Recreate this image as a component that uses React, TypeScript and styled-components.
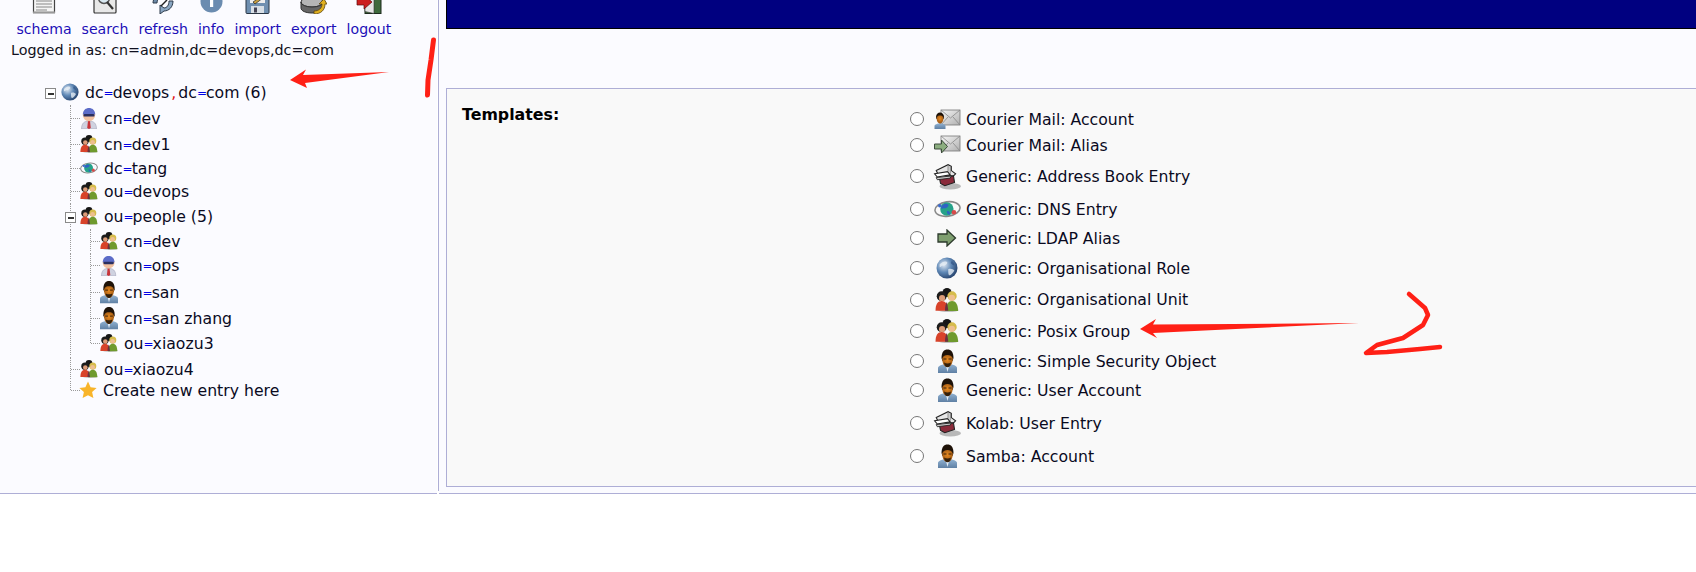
import React from "react";
import styled, { createGlobalStyle } from "styled-components";

const Global = createGlobalStyle`
  html, body { margin: 0; padding: 0; background: #fff; }
  body { font-family: "DejaVu Sans", Verdana, sans-serif; color: #000; overflow: hidden; }
`;

const Page = styled.div`
  position: relative;
  width: 1696px;
  height: 572px;
  background: #fff;
`;
const Frame = styled.div`
  display: flex;
  height: 494px;
  gap: 2px;
`;
const Sidebar = styled.aside`
  width: 437px;
  flex: none;
  background: #fbfbff;
  box-sizing: border-box;
  border-bottom: 1.5px solid #aeaed6;
  position: relative;
`;
const Divider = styled.div`
  position: absolute;
  top: 0;
  right: -2px;
  width: 1.5px;
  height: 491px;
  background: #aeaed6;
`;
const Main = styled.main`
  flex: 1;
  min-width: 0;
  display: flex;
  flex-direction: column;
  box-sizing: border-box;
  padding-left: 7px;
  background: #fbfbff;
  border-bottom: 1.5px solid #aeaed6;
`;
const Banner = styled.div`
  height: 28px;
  flex: none;
  background: #000080;
  border-left: 1px solid #000;
  border-bottom: 1px solid #000;
  border-top: 1px solid #000;
  margin-top: -1px;
`;
const Panel = styled.section`
  margin-top: 59px;
  height: 399px;
  flex: none;
  display: flex;
  box-sizing: border-box;
  background: #f9f9f9;
  border: 1px solid #aeaed6;
  border-right: none;
`;
const PanelTitle = styled.h2`
  margin: 0;
  width: 463px;
  flex: none;
  padding: 17px 0 0 15px;
  box-sizing: border-box;
  font-size: 15.8px;
  line-height: 18px;
  font-weight: bold;
`;
const TemplateList = styled.div`
  padding-top: 17px;
  display: flex;
  flex-direction: column;
`;
const TemplateRow = styled.label<{ $h: number }>`
  display: flex;
  align-items: center;
  height: ${(p) => p.$h}px;
  font-size: 15.7px;
  color: #0a0a1e;
`;
const Radio = styled.input`
  width: 14px;
  height: 14px;
  margin: 0;
  flex: none;
`;
const TemplateIconCell = styled.span`
  width: 30px;
  margin: 0 4px 0 8px;
  flex: none;
  display: flex;
  justify-content: center;
  align-items: center;
`;
const Toolbar = styled.nav`
  display: flex;
  gap: 10px;
  padding-left: 16.500px;
`;
const Tool = styled.a`
  display: flex;
  flex-direction: column;
  align-items: center;
  font-size: 14.1px;
  line-height: 16px;
  color: #1c0fb8;
`;
const ToolIcon = styled.span`
  height: 14px;
  margin-bottom: 7px;
  display: block;
  overflow: hidden;
`;
const LoggedIn = styled.div`
  margin-top: 5px;
  padding-left: 11px;
  font-size: 14.3px;
  line-height: 16px;
  color: #101020;
`;
const Tree = styled.div`
  margin-top: 21px;
  padding-left: 40px;
`;
const TreeRow = styled.div<{ $h: number }>`
  display: flex;
  align-items: center;
  height: ${(p) => p.$h}px;
  font-size: 15.7px;
  color: #0a0a1e;
`;
const Guide = styled.span<{ $kind: "pipe" | "tee" | "elbow" }>`
  width: 20px;
  flex: none;
  align-self: stretch;
  position: relative;
  &::before {
    content: "";
    position: absolute;
    left: 10px;
    top: 0;
    height: ${(p) => (p.$kind === "elbow" ? "50%" : "calc(100% - 2px)")};
    border-left: 1px dotted #9a9a9a;
  }
  &::after {
    content: "";
    display: ${(p) => (p.$kind === "pipe" ? "none" : "block")};
    position: absolute;
    left: 11px;
    width: 9px;
    top: 50%;
    border-top: 1px dotted #9a9a9a;
  }
`;
const Expander = styled.span`
  width: 11px;
  height: 11px;
  box-sizing: border-box;
  border: 1px solid #8a8a8a;
  background: #fff;
  position: absolute;
  left: 5px;
  top: calc(50% - 4px);
  &::after {
    content: "";
    position: absolute;
    left: 1.500px;
    right: 1.500px;
    top: 3.500px;
    height: 2px;
    background: #333;
  }
`;
const ExpanderCell = styled.span<{ $guide?: boolean }>`
  width: 20px;
  flex: none;
  align-self: stretch;
  position: relative;
  ${(p) =>
    p.$guide
      ? `&::before { content: ""; position: absolute; left: 10px; top: 0; bottom: 2px; border-left: 1px dotted #9a9a9a; }`
      : ""}
`;
const TreeIconCell = styled.span<{ $nudge?: number }>`
  width: 18px;
  margin-left: ${(p) => p.$nudge ?? 0}px;
  margin-right: 6px;
  flex: none;
  display: flex;
  justify-content: center;
  align-items: center;
`;
const Spacer = styled.span`
  width: 1px;
  flex: none;
`;
const Eq = styled.span`
  color: #0000e6;
  font-size: 12px;
  letter-spacing: -1px;
  vertical-align: 1px;
`;
const Comma = styled.span`
  color: #e01010;
  margin: 0 2px;
`;
const Annotations = styled.svg`
  position: absolute;
  left: 0;
  top: 0;
  pointer-events: none;
`;

/* ---------- icons ---------- */
const Defs = () => (
  <svg width="0" height="0" style={{ position: "absolute" }}>
    <defs>
      <radialGradient id="earth" cx="0.35" cy="0.35" r="0.8">
        <stop offset="0" stopColor="#dfe8f2" />
        <stop offset="0.45" stopColor="#5f88b6" />
        <stop offset="1" stopColor="#16305a" />
      </radialGradient>
      <linearGradient id="shirt" x1="0" y1="0" x2="0" y2="1">
        <stop offset="0" stopColor="#8fb0d0" />
        <stop offset="1" stopColor="#5f80a4" />
      </linearGradient>
      <radialGradient id="skin" cx="0.5" cy="0.4" r="0.7">
        <stop offset="0" stopColor="#e88a20" />
        <stop offset="1" stopColor="#8a4a10" />
      </radialGradient>
      <linearGradient id="env" x1="0" y1="0" x2="1" y2="1">
        <stop offset="0" stopColor="#f6f6f6" />
        <stop offset="1" stopColor="#b0b0b0" />
      </linearGradient>
    </defs>
  </svg>
);

const Globe = ({ s = 18 }: { s?: number }) => (
  <svg width={s} height={s} viewBox="0 0 18 18">
    <circle cx="9" cy="9" r="8.600" fill="url(#earth)" />
    <path d="M3 6c2-2 4-3 6-2 1 1-1 3-3 3S4 9 3 8zM10 10c2-1 4 0 5 1-1 2-3 4-4 4s-1-3-1-5z" fill="#e6eef5" opacity=".8" />
    <path d="M13 3c1 1 2 2 2 4-1 0-2-1-3-2z" fill="#2c4f80" opacity=".6" />
  </svg>
);

const Group = ({ s = 18 }: { s?: number }) => (
  <svg width={s} height={s} viewBox="0 0 18 18">
    <ellipse cx="10" cy="16.500" rx="7.800" ry="1.500" fill="#888" opacity=".5" />
    <circle cx="9" cy="3.400" r="3.400" fill="#161616" />
    <circle cx="5" cy="6.200" r="3.700" fill="#1c1c1c" />
    <circle cx="5.300" cy="7.600" r="2.300" fill="#dc9c78" />
    <path d="M.4 17c0-5 1.800-7.200 4.600-7.200S9.500 12 9.500 17z" fill="#d8432a" />
    <circle cx="12.800" cy="6" r="3.500" fill="#d6bc4c" />
    <circle cx="12.600" cy="7.400" r="2.400" fill="#eebf90" />
    <path d="M8.200 17.200c0-5 2-7.400 4.600-7.400s4.500 2.400 4.500 7.400z" fill="#6f9a2e" />
    <path d="M7.500 17c0-3 .6-5.500 1.500-6.500l1 6.500z" fill="#6b3040" />
  </svg>
);

const Officer = ({ s = 22 }: { s?: number }) => (
  <svg width={s * 0.82} height={s} viewBox="0 0 18 22">
    <path d="M1.500 22c0-6 3-8 7.500-8s7.500 2 7.500 8z" fill="#cfd2e0" stroke="#9a9ab0" strokeWidth=".5" />
    <path d="M8 14h2l.8 7-1.800 1-1.800-1z" fill="#c8353a" />
    <circle cx="9" cy="8" r="6.200" fill="#f0c0a0" />
    <path d="M2.800 7.500C3 3 6 1 9 1s6 2 6.200 6.500z" fill="#5c6cc8" />
    <rect x="3.500" y="7" width="11" height="2.600" rx="1.200" fill="#2a2f60" />
  </svg>
);

const Man = ({ w = 19, h = 24 }: { w?: number; h?: number }) => (
  <svg width={w} height={h} viewBox="0 0 19 24">
    <path d="M0 24v-5c0-2 3-3 5-3.500h9c2 .5 5 1.500 5 3.500v5z" fill="url(#shirt)" />
    <path d="M8 17h3l-1.500 6z" fill="#e6eef5" />
    <path d="M3.500 9C3.500 3 6 .5 9.500.500S15.500 3 15.500 9l-1 3h-10z" fill="#1e1208" />
    <path d="M4.200 9.500c1-3 3-3.500 5.300-3.500s4.300.5 5.300 3.500c0 5-2.300 8.500-5.300 8.500s-5.300-3.500-5.300-8.500z" fill="url(#skin)" />
    <path d="M6 13.500c2 1.200 5 1.200 7 0-.3 3-2 4.800-3.500 4.800S6.300 16.500 6 13.500z" fill="#33200c" />
    <path d="M5.500 10h3M10.500 10h3" stroke="#3a2008" strokeWidth="1" />
  </svg>
);

const Dns = ({ w = 21, h = 15 }: { w?: number; h?: number }) => (
  <svg width={w} height={h} viewBox="0 0 21 15">
    <ellipse cx="10.500" cy="7.500" rx="9.800" ry="5.600" fill="none" stroke="#8a8a8a" strokeWidth="1.200" transform="rotate(-8 10.500 7.500)" />
    <circle cx="10" cy="7.500" r="5.200" fill="#26a28a" />
    <path d="M6 5c2-2 4-2 5-1s-1 3-3 3-2 1-2.500 0zM10 9c2 0 3 1 2 3-1 0-2-1-2-3z" fill="#2f62c4" />
    <circle cx="15.500" cy="10" r="1.800" fill="#d84a4a" />
    <circle cx="4.500" cy="5" r="1.400" fill="#3a6ad0" />
  </svg>
);

const Star = () => (
  <svg width="18" height="18" viewBox="0 0 18 18">
    <path d="M9 .6l2.600 5.600 6 .7-4.500 4.100 1.300 6L9 14.200 3.600 17l1.300-6L.4 6.900l6-.7z" fill="#f8b42a" />
  </svg>
);

const BookStack = () => (
  <svg width="28" height="27" viewBox="0 0 26 25">
    <ellipse cx="16" cy="21.500" rx="10" ry="3" fill="#777" opacity=".5" />
    <path d="M3 7l11-5.500 3 1.500v4l4 3-2 2-14-1z" fill="#e6e6e6" stroke="#222" strokeWidth="1" />
    <path d="M1.500 10l12-2 2.500 3-12 2z" fill="#fff" stroke="#222" strokeWidth="1" />
    <path d="M6 14l13-2 1 6-9 3-4-2z" fill="#8a2a3a" stroke="#222" strokeWidth="1" />
    <path d="M3 13.500l14-1.500-1 2-12 1.500z" fill="#ccc" stroke="#222" strokeWidth=".8" />
    <path d="M14 2v6M16 3v7" stroke="#777" strokeWidth=".8" />
  </svg>
);

const Envelope = () => (
  <g>
    <rect x="7" y="1" width="19" height="15" fill="url(#env)" stroke="#777" strokeWidth=".8" />
    <path d="M7 1l9.500 8L26 1M7 16l7-8M26 16l-7-8" fill="none" stroke="#888" strokeWidth=".8" />
  </g>
);

const MailMan = () => (
  <svg width="27" height="20" viewBox="0 0 27 20">
    <Envelope />
    <path d="M.5 20v-3c0-1.500 2-2 3.500-2.500h4c1.500.5 3.500 1 3.500 2.500v3z" fill="url(#shirt)" />
    <path d="M2 8C2 5 4 3.500 6 3.500S10 5 10 8l-.5 2h-7z" fill="#1e1208" />
    <path d="M2.600 9C3 7 4.500 6.500 6 6.500S9 7 9.400 9c0 3-1.400 5.500-3.400 5.500S2.600 12 2.600 9z" fill="url(#skin)" />
  </svg>
);

const MailArrow = () => (
  <svg width="27" height="20" viewBox="0 0 27 20">
    <Envelope />
    <path d="M.5 9h7V5l6 6.500-6 6.500v-4h-7z" fill="#8cae80" stroke="#3c4c3c" strokeWidth="1" />
  </svg>
);

const GreenArrow = () => (
  <svg width="20" height="18" viewBox="0 0 20 18">
    <path d="M1 5h9V1l8.500 8-8.500 8v-4H1z" fill="#7f9f70" stroke="#2c3a2c" strokeWidth="1.300" />
  </svg>
);

const IconClip = styled.svg`
  display: block;
`;

const SchemaIcon = () => (
  <IconClip width="24" height="14" viewBox="0 10 24 14">
    <rect x="1.500" y="0" width="21" height="22.500" fill="#f4f4f4" stroke="#444" strokeWidth="1.200" />
    <path d="M4 11h16M4 14h16M4 17h16M4 20h11" stroke="#888" strokeWidth="1" />
    <rect x="1" y="21.500" width="22" height="2" fill="#999" />
  </IconClip>
);
const SearchIcon = () => (
  <IconClip width="24" height="14" viewBox="0 10 24 14">
    <rect x="1" y="0" width="22" height="23" rx="1" fill="#e8e8e8" stroke="#333" strokeWidth="1.200" />
    <circle cx="11" cy="8" r="5.500" fill="#d8e8f0" stroke="#555" strokeWidth="1.500" />
    <path d="M14 12l6 7" stroke="#333" strokeWidth="2.200" />
  </IconClip>
);
const RefreshIcon = () => (
  <IconClip width="26" height="14" viewBox="0 10 26 14">
    <path d="M3 13c0-5 4-9 9-9l4-3v9l-4-3c-3 0-5 3-5 6z" fill="#6d8aa8" stroke="#2e3c4c" strokeWidth="1" />
    <path d="M23 11c0 6-4 10-9 10l-4 3v-9l4 3c3 0 5-3 5-7z" fill="#8aa6c2" stroke="#2e3c4c" strokeWidth="1" />
    <path d="M11 16l6-6" stroke="#222" strokeWidth="1.400" />
  </IconClip>
);
const InfoIcon = () => (
  <IconClip width="23" height="14" viewBox="0 10 23 14">
    <circle cx="11.500" cy="11.500" r="11" fill="#6b8cb0" />
    <rect x="10" y="9" width="3.200" height="8" fill="#fff" />
  </IconClip>
);
const ImportIcon = () => (
  <IconClip width="25" height="14" viewBox="0 10 25 14">
    <rect x="1" y="0" width="23" height="23.500" rx="1" fill="#6f8fb0" stroke="#2a3644" strokeWidth="1" />
    <rect x="5" y="2" width="15" height="11" fill="#eee" />
    <path d="M8 12l9-6 1 2-8 6z" fill="#c9a040" stroke="#222" strokeWidth=".7" />
    <rect x="6" y="16" width="13" height="7" fill="#d8dfe6" />
    <rect x="9" y="17.500" width="3" height="5" fill="#445" />
  </IconClip>
);
const ExportIcon = () => (
  <IconClip width="27" height="14" viewBox="0 10 27 14">
    <ellipse cx="12" cy="12" rx="11" ry="5" fill="#b5b5b5" stroke="#333" />
    <path d="M1 12v6c0 3 5 5 11 5s11-2 11-5v-6c0 3-5 5-11 5S1 15 1 12z" fill="#666" stroke="#333" />
    <path d="M14 21c5 0 8-3 8-7h-3l5-5 3 5h-2c0 6-4 10-11 10z" fill="#e0b020" stroke="#5a4410" strokeWidth=".8" />
  </IconClip>
);
const LogoutIcon = () => (
  <IconClip width="26" height="14" viewBox="0 10 26 14">
    <rect x="9" y="0" width="16" height="23.500" fill="#3e6a3c" stroke="#1c2a1c" strokeWidth="1" />
    <path d="M9 3l9 3v17.500l-9-2z" fill="#e6e6e6" stroke="#333" strokeWidth=".6" />
    <path d="M1 9h7V5l8 7-8 7v-4H1z" fill="#cc1f1f" stroke="#5c0c0c" strokeWidth=".7" />
  </IconClip>
);

/* ---------- data ---------- */
const tools = [
  { label: "schema", Icon: SchemaIcon },
  { label: "search", Icon: SearchIcon },
  { label: "refresh", Icon: RefreshIcon },
  { label: "info", Icon: InfoIcon },
  { label: "import", Icon: ImportIcon },
  { label: "export", Icon: ExportIcon },
  { label: "logout", Icon: LogoutIcon },
];

const Dn = ({ k, v, suffix }: { k: string; v: string; suffix?: string }) => (
  <span>
    {k}
    <Eq>=</Eq>
    {v}
    {suffix ? ` ${suffix}` : ""}
  </span>
);

type Guides = ("pipe" | "tee" | "elbow")[];
type Node = {
  h: number;
  guides: Guides;
  expand?: boolean;
  icon: React.ReactNode;
  k: string;
  v: string;
  suffix?: string;
};

const nodes: Node[] = [
  { h: 26, guides: ["tee"], icon: <Officer s={22} />, k: "cn", v: "dev" },
  { h: 26, guides: ["tee"], icon: <Group />, k: "cn", v: "dev1" },
  { h: 22, guides: ["tee"], icon: <Dns w={23} h={16} />, k: "dc", v: "tang" },
  { h: 24, guides: ["tee"], icon: <Group />, k: "ou", v: "devops" },
  { h: 26, guides: [], expand: true, icon: <Group />, k: "ou", v: "people", suffix: "(5)" },
  { h: 24, guides: ["pipe", "tee"], icon: <Group />, k: "cn", v: "dev" },
  { h: 24, guides: ["pipe", "tee"], icon: <Officer s={21} />, k: "cn", v: "ops" },
  { h: 30, guides: ["pipe", "tee"], icon: <Man />, k: "cn", v: "san" },
  { h: 22, guides: ["pipe", "tee"], icon: <Man />, k: "cn", v: "san zhang" },
  { h: 28, guides: ["pipe", "elbow"], icon: <Group />, k: "ou", v: "xiaozu3" },
  { h: 24, guides: ["tee"], icon: <Group />, k: "ou", v: "xiaozu4" },
];

const templates: { h: number; icon: React.ReactNode; label: string }[] = [
  { h: 26, icon: <MailMan />, label: "Courier Mail: Account" },
  { h: 26, icon: <MailArrow />, label: "Courier Mail: Alias" },
  { h: 36, icon: <BookStack />, label: "Generic: Address Book Entry" },
  { h: 30, icon: <Dns w={27} h={20} />, label: "Generic: DNS Entry" },
  { h: 28, icon: <GreenArrow />, label: "Generic: LDAP Alias" },
  { h: 32, icon: <Globe s={22} />, label: "Generic: Organisational Role" },
  { h: 31, icon: <Group s={24} />, label: "Generic: Organisational Unit" },
  { h: 32, icon: <Group s={24} />, label: "Generic: Posix Group" },
  { h: 28, icon: <Man />, label: "Generic: Simple Security Object" },
  { h: 30, icon: <Man />, label: "Generic: User Account" },
  { h: 36, icon: <BookStack />, label: "Kolab: User Entry" },
  { h: 30, icon: <Man />, label: "Samba: Account" },
];

export default function App() {
  return (
    <Page>
      <Global />
      <Defs />
      <Frame>
        <Sidebar>
          <Toolbar>
            {tools.map(({ label, Icon }) => (
              <Tool key={label}>
                <ToolIcon>
                  <Icon />
                </ToolIcon>
                {label}
              </Tool>
            ))}
          </Toolbar>
          <LoggedIn>Logged in as: cn=admin,dc=devops,dc=com</LoggedIn>
          <Tree>
            <TreeRow $h={26}>
              <ExpanderCell>
                <Expander />
              </ExpanderCell>
              <Spacer />
              <TreeIconCell>
                <Globe />
              </TreeIconCell>
              <span>
                dc<Eq>=</Eq>devops<Comma>,</Comma>dc<Eq>=</Eq>com (6)
              </span>
            </TreeRow>
            {nodes.map((n, i) => (
              <TreeRow key={i} $h={n.h}>
                <ExpanderCell />
                {n.expand ? (
                  <ExpanderCell $guide>
                    <Expander />
                  </ExpanderCell>
                ) : null}
                {n.guides.map((g, j) => (
                  <Guide key={j} $kind={g} />
                ))}
                <TreeIconCell>{n.icon}</TreeIconCell>
                <Dn k={n.k} v={n.v} suffix={n.suffix} />
              </TreeRow>
            ))}
            <TreeRow $h={18}>
              <ExpanderCell />
              <Guide $kind="elbow" />
              <TreeIconCell $nudge={-1}>
                <Star />
              </TreeIconCell>
              <span>Create new entry here</span>
            </TreeRow>
          </Tree>
          <Divider />
        </Sidebar>
        <Main>
          <Banner />
          <Panel>
            <PanelTitle>Templates:</PanelTitle>
            <TemplateList>
              {templates.map((t) => (
                <TemplateRow key={t.label} $h={t.h}>
                  <Radio type="radio" name="template" />
                  <TemplateIconCell>{t.icon}</TemplateIconCell>
                  {t.label}
                </TemplateRow>
              ))}
            </TemplateList>
          </Panel>
        </Main>
      </Frame>
      <Annotations width="1696" height="572" viewBox="0 0 1696 572">
        <polygon points="290,80 306,69.500 303,75 389,72 305,83 307,88" fill="#ff2016" />
        <path d="M433.500 40L431 60L428 80L427.500 95" fill="none" stroke="#ff2016" strokeWidth="5" strokeLinecap="round" strokeLinejoin="round" />
        <polygon points="1140,329 1156,319 1153,324.500 1359,323 1153,333 1157,338" fill="#ff2016" />
        <path d="M1409 294L1425 308L1428 315L1423 325L1403 338L1377 345L1366 353L1387 352L1420 349L1440 347" fill="none" stroke="#ff2016" strokeWidth="4.500" strokeLinecap="round" strokeLinejoin="round" />
      </Annotations>
    </Page>
  );
}
